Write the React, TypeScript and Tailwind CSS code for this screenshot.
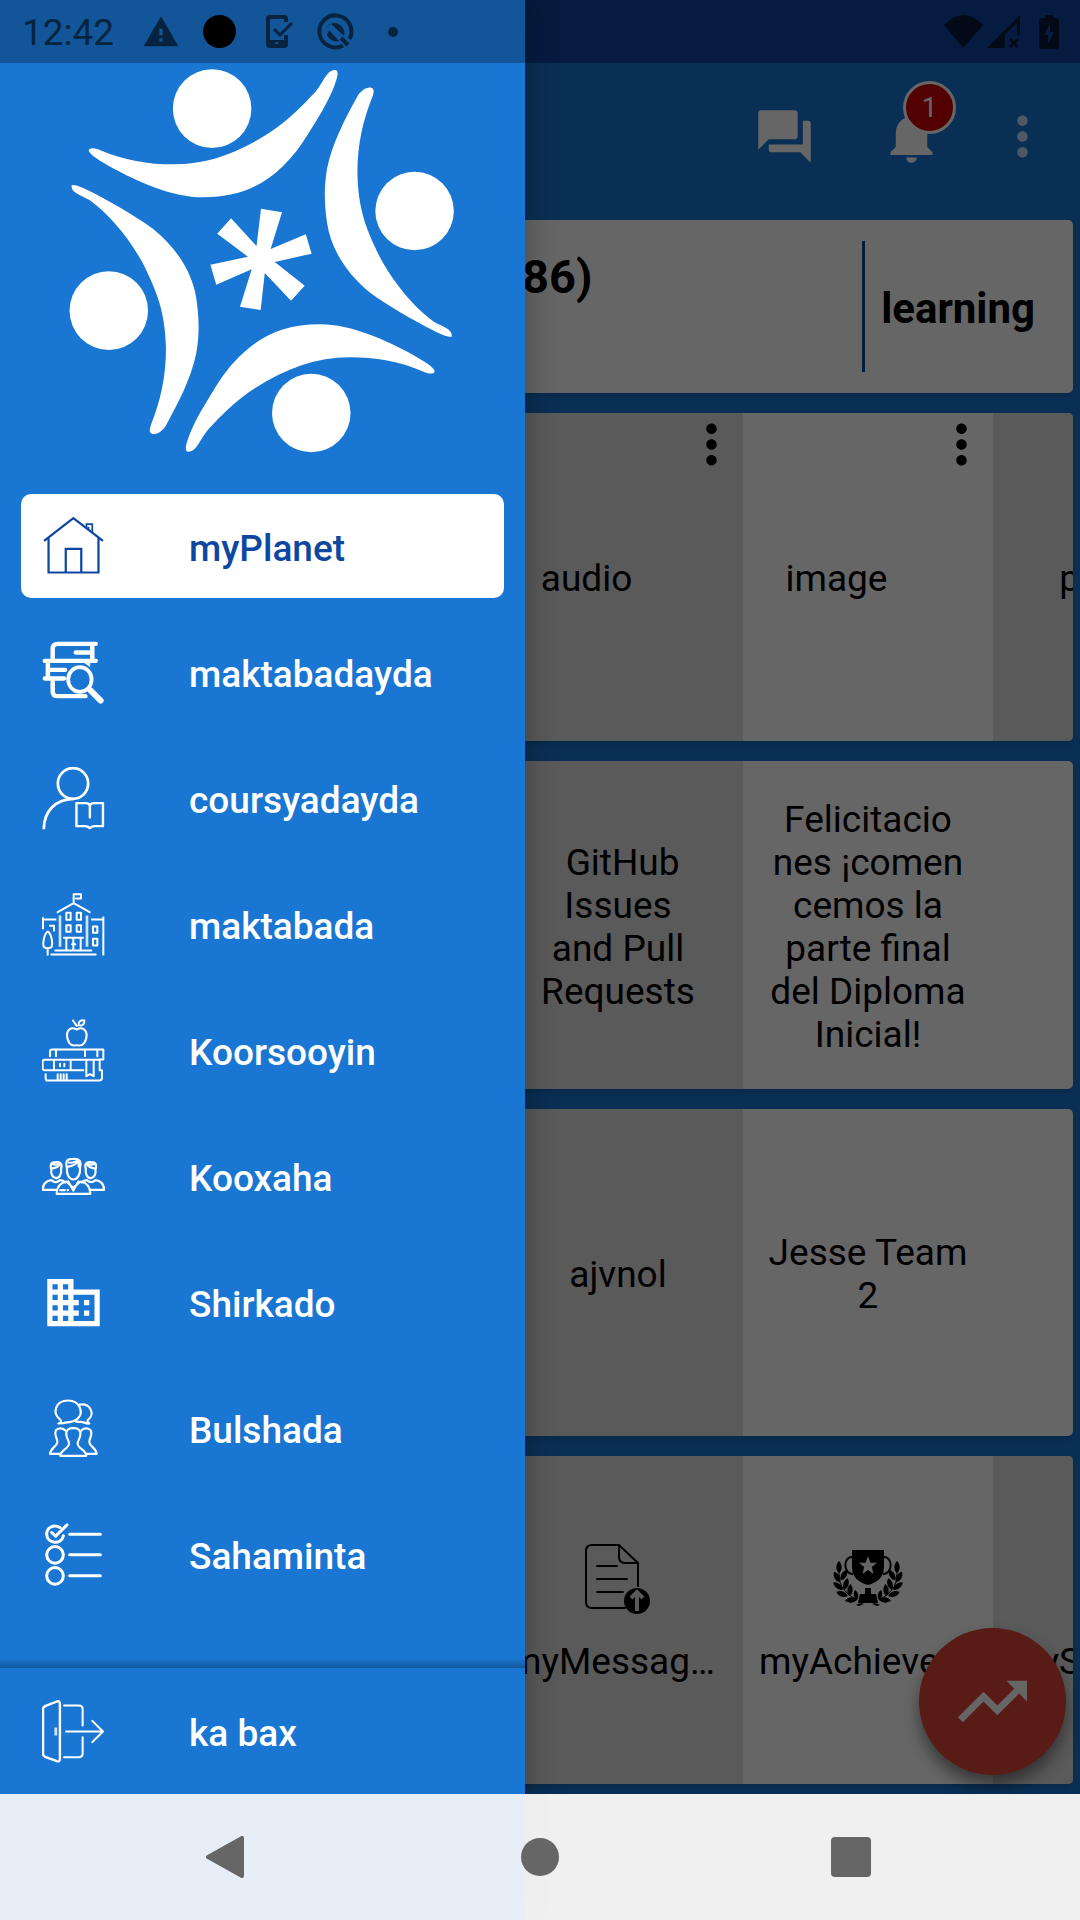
import type { ReactNode } from "react";
import {
  MdBusiness,
  MdMoreVert,
  MdNotifications,
  MdQuestionAnswer,
  MdTrendingUp,
  MdWarning,
} from "react-icons/md";

/* ---------- drawer icons ---------- */

function MenuIcon({ box, wide, children }: { box: string; wide?: boolean; children: ReactNode }) {
  return (
    <svg
      viewBox={box}
      className="size-[63px] shrink-0"
      fill="none"
      stroke="currentColor"
      strokeWidth={7}
      strokeLinecap="round"
      strokeLinejoin="round"
      aria-hidden="true"
    >
      <g transform={wide ? "scale(1.033 1)" : undefined}>{children}</g>
    </svg>
  );
}

const HomeIcon = () => (
  <MenuIcon box="126 103.5 189 189" wide>
    <g strokeWidth={6.5} strokeLinecap="butt" strokeLinejoin="miter">
      <path d="M128 181 213 113 299 181M141 173V276H286V173M191 276V205H236V276" />
      <path d="M251 143V131H268V157M257 149V139" strokeWidth={5} />
    </g>
  </MenuIcon>
);

const LibrarySearchIcon = () => (
  <MenuIcon box="126 481.5 189 189" wide>
    <g strokeWidth={13}>
      <path d="M278 490H168Q153 490 153 505V536M268 495V536M220 516H264" />
      <path d="M130 541H278M139 546V590M145 568H189M130 594H186" />
      <path d="M153 604V632Q153 647 168 647H248" />
      <ellipse cx="232" cy="597" rx="34" ry="37" strokeWidth={11} />
      <path d="M263 630 292 660" strokeWidth={18} />
    </g>
    <path d="M243 546H262V560Z" fill="currentColor" stroke="none" />
  </MenuIcon>
);

const StudentIcon = () => (
  <MenuIcon box="126 859.5 189 189" wide>
    <ellipse cx="212" cy="909" rx="44" ry="46" strokeWidth={8} />
    <path d="M127 1046C128 990 162 957 212 955" strokeWidth={8} strokeLinecap="butt" />
    <path d="M261 1011V976Q259 968 250 968H222V1037H246Q255 1037 261 1043Q267 1037 275 1037H299V968H272Q263 968 261 976" />
  </MenuIcon>
);

const SchoolIcon = () => (
  <MenuIcon box="126 97.5 189 189">
    <g strokeWidth={6}>
      <path d="M221 128V101H243V114H228M173 155 221 128 269 155" />
      <path d="M129 206V170M128 177H169M273 177H310M310 168V285M147 196H162V213" strokeLinecap="butt" />
      <path d="M180 165V259M261 165V259" strokeLinecap="butt" strokeWidth={8} opacity="0.8" />
      <path d="M199 157H212V178H199ZM230 157H243V178H230ZM199 194H212V214H199ZM230 194H243V214H230ZM279 198H292V217H279ZM279 235H292V255H279Z" />
      <path d="M192 232H249M199 234V268M242 234V268M220 234V268M216 251H226M166 270H274M154 282H287" />
      <path d="M143 213C132 220 127 252 132 260Q143 267 154 260C160 250 154 218 143 213ZM143 264V283" />
    </g>
  </MenuIcon>
);

const BooksAppleIcon = () => (
  <MenuIcon box="126 475.5 189 189">
    <g strokeWidth={6}>
      <path d="M219 480 230 496M236 494C234 482 244 478 253 480C254 491 246 498 236 494" />
      <path d="M230 507C213 498 201 507 201 524C202 544 211 560 230 554C249 560 259 544 260 524C259 507 247 498 230 507Z" />
      <path d="M150 587V574Q150 567 157 567H310V597H299V629H306V652Q306 660 298 660H143Q137 660 137 653V641" />
      <path d="M168 568V587M255 568V587M292 568V587M300 598H134Q128 598 128 604V623Q128 629 134 629H250" />
      <path d="M162 600V627M212 600V627M259 600V647L270 641 281 647V600M173 641V657M182 641V657M191 641V657M200 641V657" />
      <path d="M180 610V617M193 610V617" />
    </g>
  </MenuIcon>
);

const Side = () => (
  <g>
    <path d="M154 928C148 906 158 905 168 905C182 903 188 912 183 925C186 940 178 953 168 953C158 952 152 940 154 928Z" />
    <path d="M155 924C164 924 176 918 180 912M158 911Q170 914 180 909" />
    <path d="M168 988H128C128 970 140 960 154 959Q167 971 180 959Q190 959 196 966" />
  </g>
);

const TeamIcon = () => (
  <MenuIcon box="126 853.5 189 189">
    <g strokeWidth={6.5}>
      <Side />
      <g transform="translate(440.5 0) scale(-1 1)">
        <Side />
      </g>
      <path d="M201 924C195 900 202 895 220 895C238 894 245 902 240 922C242 942 232 957 220 957C208 957 199 942 201 924Z" />
      <path d="M202 919C216 917 230 910 234 901M206 906Q220 909 232 900M236 903V918" />
      <path d="M170 1000H271C271 978 262 967 241 963L220 982 199 963C180 967 170 980 170 1000ZM205 963 220 990 235 963M181 989H194M203 989H204" />
    </g>
  </MenuIcon>
);

const Friend = () => (
  <g>
    <path d="M196 570C187 559 166 563 166 577C165 590 174 597 172 606C169 620 151 623 150 640H180" />
    <path d="M220 563C205 562 197 570 199 583C200 595 207 600 207 609C206 626 181 628 181 646H220" />
  </g>
);

const CommunityIcon = () => (
  <MenuIcon box="126 469.5 189 189">
    <g strokeWidth={6.5}>
      <path d="M175 549C184 547 186 541 180 537C155 517 167 480 204 480C241 480 252 518 232 535C218 548 202 544 190 548Z" />
      <path d="M237 493C269 486 288 520 264 538C260 542 263 546 268 549C257 551 250 543 242 544Q231 545 223 541" />
      <Friend />
      <g transform="translate(440 0) scale(-1 1)">
        <Friend />
      </g>
    </g>
  </MenuIcon>
);

const SurveyIcon = () => (
  <MenuIcon box="126 847.5 189 189">
    <g strokeWidth={9}>
      <path d="M209 881H301M209 943H301M209 1006H301" />
      <circle cx="165" cy="943" r="25" />
      <circle cx="165" cy="1006" r="25" />
      <path d="M180 861C160 849 140 862 140 881C141 911 184 914 190 886M155 876 167 887 201 853" />
    </g>
  </MenuIcon>
);

const LogoutIcon = () => (
  <MenuIcon box="126 238.5 189 189" wide>
    <path d="M125 266Q125 260 131 257L165 243Q174 240 174 250V415Q174 425 165 422L131 409Q125 406 125 400Z" />
    <path d="M186 255H229Q240 255 240 266V315M240 350V400Q240 410 230 410H186M192 333H299M268 301 299 333 268 365" strokeWidth={6} />
    <path d="M162 321V345" strokeLinecap="butt" strokeWidth={8} opacity="0.8" />
  </MenuIcon>
);

/* ---------- logo ---------- */

const LogoPair = () => (
  <g>
    <ellipse cx="616" cy="146" rx="114" ry="118" />
    <ellipse cx="1204" cy="453" rx="114" ry="118" />
    <path d="M258 273C256 263 272 262 288 269C360 301 430 313 505 313C600 313 690 280 780 220C840 180 880 135 915 97C945 58 948 30 975 30C984 32 980 50 976 62C960 112 935 155 905 205C870 265 850 290 820 320C760 380 690 412 590 412C500 412 400 365 320 320C290 302 262 285 258 273Z" />
    <path d="M1078 83C1088 86 1086 98 1081 112C1055 180 1038 250 1038 340C1040 450 1065 510 1100 585C1140 665 1200 740 1260 785C1290 803 1314 806 1312 830C1300 832 1280 822 1260 812C1200 780 1130 740 1075 698C1000 635 960 560 950 490C940 420 942 375 950 325C965 250 1000 180 1040 105C1050 92 1064 80 1078 83Z" />
  </g>
);

const Logo = () => (
  <svg viewBox="0 9 1575 1260" className="w-full" fill="#fff" role="img" aria-label="Planet logo">
    <g transform="scale(1.033 1)">
      <LogoPair />
      <g transform="rotate(180 760 602.5)">
        <LogoPair />
      </g>
      <path d="M758 446 819 457 786 567 888 523 905 581 798 606 885 677 845 722 769 639 757 750 697 740 731 628 628 674 611 614 720 590 631 521 671 475 745 558Z" />
    </g>
  </svg>
);

/* ---------- tile icons ---------- */

const MessagesIcon = () => (
  <svg viewBox="0 0 66 70" className="h-[70px] w-[66px]" fill="none" stroke="#000" strokeWidth="2" strokeLinecap="round" aria-hidden="true">
    <path d="M40 64H7Q1 64 1 58V7Q1 1 7 1H34L53 19V42M34 1V13Q34 19 40 19H53M12 22H32M12 35H42M12 48H38" />
    <circle cx="52" cy="57" r="13" fill="#000" stroke="none" />
    <path d="M52 67V50M46 54 52 48 58 54" stroke="#e0e0e0" strokeWidth="4" strokeLinecap="butt" />
  </svg>
);

const Leaf = ({ x, y, turn, size = 6 }: { x: number; y: number; turn: number; size?: number }) => (
  <path
    d="M0 -6C4 -2 3 4 0 6C-3 4 -4 -2 0 -6Z"
    transform={`translate(${x} ${y}) rotate(${turn}) scale(${size / 6})`}
  />
);

const Laurel = () => (
  <g>
    <path d="M6 22Q4 40 24 50" fill="none" stroke="#000" strokeWidth="1" />
    <Leaf x={6} y={17} turn={0} />
    <Leaf x={4} y={27} turn={-30} />
    <Leaf x={11} y={25} turn={30} />
    <Leaf x={5} y={36} turn={-52} />
    <Leaf x={13} y={34} turn={18} />
    <Leaf x={9} y={44} turn={-70} />
    <Leaf x={17} y={40} turn={5} />
    <Leaf x={18} y={50} turn={-95} />
    <Leaf x={23} y={45} turn={-12} size={5} />
    <path d="M23 55Q27 52 31 54L26 56Z" />
  </g>
);

const TrophyIcon = () => (
  <svg viewBox="0 0 70 57" className="h-[57px] w-[70px]" aria-hidden="true">
    <Laurel />
    <g transform="translate(70 0) scale(-1 1)">
      <Laurel />
    </g>
    <path d="M19 7C10 7 10 24 20 24M51 7C60 7 60 24 50 24" fill="none" stroke="#000" strokeWidth="2" />
    <path d="M19 0H51V17C51 29 42 33 35 35C28 33 19 29 19 17ZM32 38H38V44H43L45 53H25L27 44H32Z" />
    <path d="M35 6 37.4 12.800H44L38.800 17 40.600 24 35 20 29.400 24 31.200 17 26 12.800H32.600Z" fill="#fff" />
  </svg>
);

/* ---------- data ---------- */

const menu: { label: string; icon: ReactNode; active?: boolean }[] = [
  { label: "myPlanet", icon: <HomeIcon />, active: true },
  { label: "maktabadayda", icon: <LibrarySearchIcon /> },
  { label: "coursyadayda", icon: <StudentIcon /> },
  { label: "maktabada", icon: <SchoolIcon /> },
  { label: "Koorsooyin", icon: <BooksAppleIcon /> },
  { label: "Kooxaha", icon: <TeamIcon /> },
  { label: "Shirkado", icon: <MdBusiness className="size-[63px] shrink-0" /> },
  { label: "Bulshada", icon: <CommunityIcon /> },
  { label: "Sahaminta", icon: <SurveyIcon /> },
];

/* ---------- dashboard pieces ---------- */

function Row({ children }: { children: ReactNode }) {
  return (
    <section className="flex min-h-[327px] grow basis-0 overflow-hidden rounded-[5px] bg-white shadow-md">
      <div className="w-[236px] shrink-0" />
      <div className="w-[250px] shrink-0" />
      {children}
    </section>
  );
}

function Cell({ shaded, children }: { shaded?: boolean; children: ReactNode }) {
  return (
    <div className={`flex w-[250px] shrink-0 items-center justify-center text-center ${shaded ? "bg-[#e0e0e0]" : "bg-white"}`}>
      {children}
    </div>
  );
}

function Resource({ shaded, name }: { shaded?: boolean; name: string }) {
  return (
    <Cell shaded={shaded}>
      <p className="flex-1 pt-1">{name}</p>
      <button type="button" aria-label={`${name} options`} className="self-start">
        <MdMoreVert className="size-[63px]" />
      </button>
    </Cell>
  );
}

function Tile({ shaded, label, children }: { shaded?: boolean; label: string; children?: ReactNode }) {
  return (
    <Cell shaded={shaded}>
      <a href="#tile" className="flex w-full flex-col gap-[22px] pb-[18px]">
        <span className="flex h-[79px] items-center justify-center">{children}</span>
        <span className="whitespace-nowrap pl-4 text-left">{label}</span>
      </a>
    </Cell>
  );
}

export default function App() {
  return (
    <div className="relative flex min-h-screen flex-col overflow-hidden bg-[#1976d2] font-['Roboto',sans-serif] text-[37px] leading-[43px] text-black">
      <div className="h-[63px] bg-[#0d47a1]" />
      <header className="flex h-[147px] items-center justify-end pr-[26px] text-white">
        <button type="button" aria-label="Chat" className="mr-16">
          <MdQuestionAnswer className="size-[63px]" />
        </button>
        <button type="button" aria-label="Notifications" className="relative mr-12">
          <MdNotifications className="size-[63px]" />
          <span className="absolute -top-6 left-[23px] flex size-[53px] items-center justify-center rounded-full border-[3px] border-white bg-[#cc0000] text-[28px]">
            1
          </span>
        </button>
        <button type="button" aria-label="More options" className="text-white/75">
          <MdMoreVert className="size-[63px]" />
        </button>
      </header>

      <main className="flex flex-1 flex-col gap-5 px-[7px] pt-[10px] pb-[10px]">
        <section className="flex h-[173px] rounded-[5px] bg-white py-[21px] shadow-md">
          <h1 className="flex-1 pt-2 pl-[515px] text-[47px] leading-[55px] font-bold">86)</h1>
          <p className="flex items-center border-l-[3px] border-[#0d47a1] pt-1 pr-[38px] pl-4 text-[42px] font-bold">
            learning
          </p>
        </section>
        <Row>
          <Resource shaded name="audio" />
          <Resource name="image" />
          <Resource shaded name="pdf" />
        </Row>
        <Row>
          <Cell shaded>
            <p className="pt-1">
              &nbsp;GitHub
              <br />
              Issues
              <br />
              and Pull
              <br />
              Requests
            </p>
          </Cell>
          <Cell>
            <p className="pt-1">
              Felicitacio
              <br />
              nes ¡comen
              <br />
              cemos la
              <br />
              parte final
              <br />
              del Diploma
              <br />
              Inicial!
            </p>
          </Cell>
        </Row>
        <Row>
          <Cell shaded>
            <p className="pt-1">ajvnol</p>
          </Cell>
          <Cell>
            <p className="pt-1">
              Jesse Team
              <br />2
            </p>
          </Cell>
        </Row>
        <Row>
          <Tile shaded label="myMessag…">
            <MessagesIcon />
          </Tile>
          <Tile label="myAchieve…">
            <TrophyIcon />
          </Tile>
          <Tile shaded label="mySurve…" />
        </Row>
      </main>
      <div className="h-[126px] bg-white" />

      <button
        type="button"
        aria-label="Activity"
        className="absolute right-[14px] bottom-[145px] flex size-[147px] items-center justify-center rounded-full bg-[#db4437] text-white shadow-[0_10px_16px_rgba(0,0,0,0.45)]"
      >
        <MdTrendingUp className="size-[83px]" />
      </button>

      <div className="absolute inset-0 bg-black/60" />

      <aside className="absolute inset-y-0 left-0 flex w-[525px] flex-col bg-[#1976d2] font-medium text-white shadow-[0_0_32px_rgba(0,0,0,0.3)]">
        <div className="h-[63px] bg-black/27" />
        <Logo />
        <nav className="flex flex-1 flex-col gap-[22px] px-[21px] py-[11px]">
          {menu.map((m) => (
            <a
              key={m.label}
              href="#menu"
              aria-current={m.active ? "page" : undefined}
              className={`flex h-[104px] items-center gap-[84px] rounded-[10px] pl-[21px] ${m.active ? "bg-white text-[#0d47a1]" : ""}`}
            >
              {m.icon}
              <span className="pt-1">{m.label}</span>
            </a>
          ))}
        </nav>
        <div className="h-[10px] bg-linear-to-b from-[#1976d2] to-[#14589c]" />
        <a href="#logout" className="flex h-[126px] items-center gap-[84px] pl-[42px]">
          <LogoutIcon />
          <span className="pt-1">ka bax</span>
        </a>
        <div className="h-[126px] bg-black/27" />
      </aside>

      {/* system status bar */}
      <div className="absolute inset-x-0 top-0 flex h-[63px] items-center pl-[22px] text-[#06243f]">
        <span className="w-[120px] pt-0.5">12:42</span>
        <MdWarning className="size-[38px]" />
        <span className="ml-[23px] size-[33px] rounded-full bg-black" />
        <svg viewBox="0 0 27 34" className="ml-[30px] h-[34px] w-[27px]" fill="none" stroke="currentColor" strokeWidth="4" aria-hidden="true">
          <path d="M20 7V4Q20 2 18 2H4Q2 2 2 4V29Q2 31 4 31H18Q20 31 20 29V20" />
          <path d="M8 14 14 20 26 8" strokeWidth="3" />
          <path d="M2 25H20V32H2Z M9.500 27V30H12V27Z" fill="currentColor" fillRule="evenodd" stroke="none" />
        </svg>
        <svg viewBox="0 0 37 37" className="ml-6 size-[37px]" fill="none" stroke="currentColor" strokeWidth="4" aria-hidden="true">
          <path d="M26 32.500A16 16 0 1 1 32.500 26" />
          <path d="M9.500 14A10 10 0 0 1 27 23L14 11ZM10 22 12 17 22 28A10 10 0 0 1 10 22Z" fill="currentColor" stroke="none" />
          <path d="M24 25 31 32" />
        </svg>
        <span className="ml-[34px] size-[10px] rounded-full bg-current" />
        <div className="ml-auto flex items-center pr-[21px] text-[#020a17]">
          <svg viewBox="0 0 39 33" className="h-[33px] w-[39px]" fill="currentColor" aria-hidden="true">
            <path d="M0 10Q19.500 -10 39 10L19.500 33Z" />
          </svg>
          <svg viewBox="0 0 33 33" className="ml-1 size-[33px]" fill="none" stroke="currentColor" aria-hidden="true">
            <path d="M0 33 33 0V20H30V8L18 20V33Z" fill="currentColor" stroke="none" />
            <path d="M23 24 31 32M31 24 23 32" strokeWidth="3" />
          </svg>
          <svg viewBox="0 0 20 34" className="ml-[19px] h-[34px] w-5" fill="currentColor" aria-hidden="true">
            <path fillRule="evenodd" d="M6 0H14V3H18Q20 3 20 6V31Q20 34 18 34H2Q0 34 0 31V6Q0 3 2 3H6ZM11 8 5 20H9V29L15 17H11Z" />
          </svg>
        </div>
      </div>

      {/* system navigation bar */}
      <div className="absolute inset-x-0 bottom-0 grid h-[126px] grid-cols-[1fr_84px_1fr] items-center bg-white/90 text-[#666]">
        <button type="button" aria-label="Back" className="mr-[254px] justify-self-end">
          <svg viewBox="0 0 38 42" className="h-[42px] w-[38px]" fill="currentColor" stroke="currentColor" strokeWidth="4" strokeLinejoin="round">
            <path d="M36 2V40L2 21Z" />
          </svg>
        </button>
        <button type="button" aria-label="Home" className="size-[38px] justify-self-center rounded-full bg-current" />
        <button type="button" aria-label="Recent apps" className="ml-[249px] size-10 rounded-[4px] bg-current" />
      </div>
    </div>
  );
}
